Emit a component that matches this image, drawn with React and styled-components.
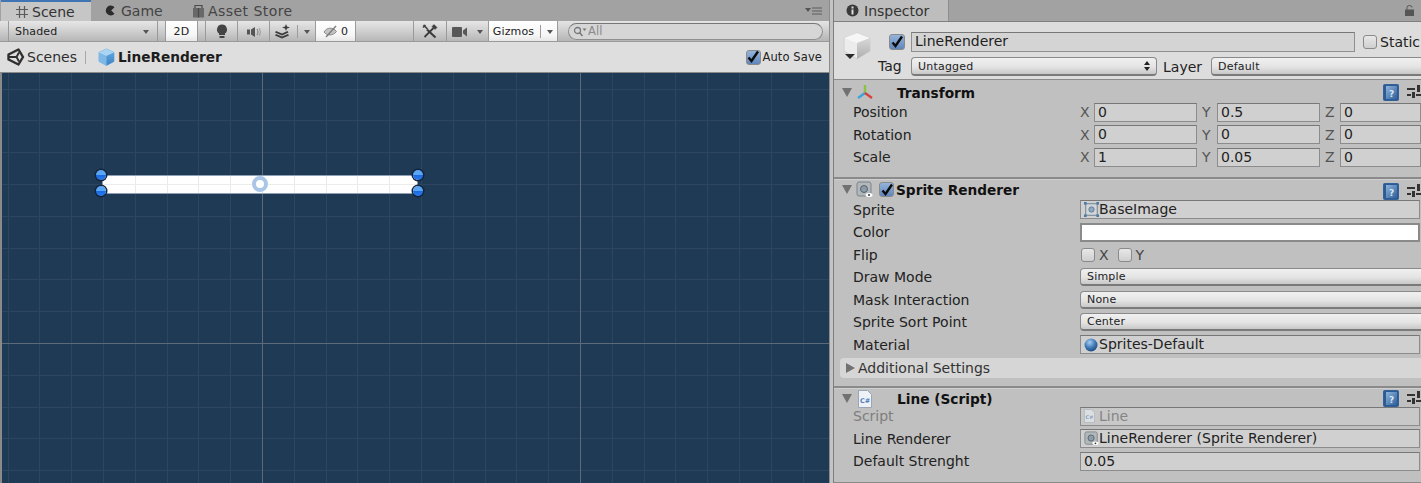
import React from "react";
import styled, { createGlobalStyle } from "styled-components";

const Global = createGlobalStyle`
  html, body { margin: 0; padding: 0; background: #bdbdbd; overflow: hidden; }
  body { font-family: "DejaVu Sans", Verdana, sans-serif; color: #111; }
`;

const Page = styled.div`
  display: flex;
  width: 1421px;
  height: 483px;
  overflow: hidden;
`;

/* ---------- Scene panel ---------- */
const ScenePanel = styled.section`
  width: 829px;
  flex: none;
  display: flex;
  flex-direction: column;
`;
const TabBar = styled.div`
  height: 21px;
  flex: none;
  display: flex;
  align-items: stretch;
  background: #a2a2a2;
  position: relative;
  padding-left: ${(p) => p.$pad}px;
`;
const Tab = styled.div`
  display: flex;
  align-items: center;
  flex: none;
  gap: ${(p) => p.$gap || 3}px;
  box-sizing: border-box;
  width: ${(p) => p.$w}px;
  padding-left: ${(p) => p.$pl}px;
  font-size: 14px;
  letter-spacing: ${(p) => p.$ls || 0}px;
  color: ${(p) => (p.$active ? "#333" : "#444")};
  background: ${(p) => (p.$active ? "#c6c6c6" : "transparent")};
  border-top: ${(p) => (p.$blue ? "2px solid #3f74b5" : "none")};
  ${(p) => p.$active && !p.$blue && "border-right: 1px solid #8e8e8e; background: #bdbdbd;"}
`;
const MenuIcon = styled.svg`
  position: absolute;
  right: ${(p) => p.$r}px;
  top: ${(p) => p.$t}px;
`;
const Toolbar = styled.div`
  height: 21px;
  flex: none;
  box-sizing: border-box;
  display: flex;
  align-items: stretch;
  padding-left: 8px;
  background: linear-gradient(#e4e4e4, #d0d0d0 45%, #b4b4b4);
  border-bottom: 1px solid #9a9a9a;
  font-size: 11px;
  letter-spacing: .15px;
  color: #222;
`;
const ToolBtn = styled.div`
  width: ${(p) => p.$w}px;
  flex: none;
  box-sizing: border-box;
  display: flex;
  align-items: center;
  justify-content: ${(p) => p.$left ? "space-between" : "center"};
  gap: ${(p) => p.$gap || 0}px;
  padding: ${(p) => p.$left ? "1px 8px 0 6px" : "1px 0 0"};
  margin-left: ${(p) => p.$ml || 0}px;
  border-right: 1px solid #9a9a9a;
  ${(p) => p.$first && "border-left: 1px solid #9a9a9a;"}
  background: ${(p) => p.$on ? "linear-gradient(#fff, #f6f6f6 70%, #e6e6e6)" : "linear-gradient(#e6e6e6, #d2d2d2 45%, #b6b6b6)"};
`;
const Caret = styled.i`
  display: inline-block;
  width: 0;
  height: 0;
  border-left: 3px solid transparent;
  border-right: 3px solid transparent;
  border-top: 4px solid #555;
`;
const SplitLine = styled.i`
  width: 1px;
  align-self: stretch;
  margin: 3px 0;
  background: #9c9c9c;
`;
const SearchWrap = styled.div`
  margin-left: 10px;
  width: 255px;
  height: 17px;
  align-self: center;
  box-sizing: border-box;
  border: 1px solid #8f8f8f;
  border-top-color: #777;
  border-radius: 9px;
  background: #d6d6d6;
  display: flex;
  align-items: center;
  gap: 1px;
  padding-left: 4px;
  font-size: 11.5px;
  color: #8a8a8a;
`;
const Crumbs = styled.div`
  height: 31px;
  flex: none;
  box-sizing: border-box;
  background: #dedede;
  border-bottom: 1px solid #8a8a8a;
  display: flex;
  align-items: center;
  padding: 0 7px;
  font-size: 14px;
  color: #2e2e2e;
`;
const CrumbSep = styled.i`
  width: 1px;
  height: 13px;
  background: #a8a8a8;
  margin: 0 12px 0 8px;
`;
const Bold = styled.span`
  font-weight: 700;
  font-size: 13.7px;
  color: #1c1c1c;
`;
const AutoSave = styled.label`
  margin-left: auto;
  display: flex;
  align-items: center;
  gap: 2px;
  font-size: 11.5px;
  letter-spacing: .1px;
  color: #222;
`;
const Viewport = styled.div`
  flex: 1;
  position: relative;
  overflow: hidden;
  background: #1f3a55;
  &::after {
    content: "";
    position: absolute;
    left: 0;
    top: 0;
    bottom: 0;
    width: 2px;
    background: #8a8a8a;
  }
`;
const GridSvg = styled.svg`
  position: absolute;
  left: 0;
  top: 0;
`;
const Sprite = styled.div`
  position: absolute;
  left: 103px;
  top: 103px;
  width: 314px;
  height: 17px;
  background: #fff;
  box-shadow: 0 0 0 1px #8ea0b3;
`;
const Handle = styled.i`
  position: absolute;
  width: 10px;
  height: 10px;
  border-radius: 50%;
  background: linear-gradient(#5ba5f5 0 45%, #1a6be0 55%, #2b7cf0);
  box-shadow: 0 0 0 1.5px #14243a;
  left: ${(p) => p.$x}px;
  top: ${(p) => p.$y}px;
`;
const Pivot = styled.i`
  position: absolute;
  left: 252px;
  top: 103px;
  width: 8px;
  height: 8px;
  border-radius: 50%;
  border: 4px solid #a9c6e6;
  background: #fff;
  filter: blur(.5px);
`;

/* ---------- Inspector ---------- */
const Divider = styled.div`
  width: 4px;
  flex: none;
  background: #c4c4c4;
  box-sizing: border-box;
  border-left: 1px solid #8c8c8c;
`;
const InspectorPanel = styled.section`
  flex: 1;
  min-width: 0;
  display: flex;
  flex-direction: column;
  background: #c0c0c0;
  border-left: 1px solid #7d7d7d;
  font-size: 14px;
  color: #222;
`;
const InspHead = styled.div`
  height: 59px;
  flex: none;
  box-sizing: border-box;
  background: #dddddd;
  border-top: 1px solid #7f7f7f;
  border-bottom: 1px solid #8a8a8a;
  display: grid;
  grid-template-columns: 77px 1fr;
  position: relative;
`;
const BigCube = styled.svg`
  position: absolute;
  left: 9px;
  top: 10px;
`;
const HeadCol = styled.div`
  grid-column: 2;
  display: flex;
  flex-direction: column;
`;
const NameRow = styled.div`
  display: flex;
  align-items: center;
  height: 20px;
  margin-top: 10px;
`;
const NameField = styled.div`
  width: 444px;
  height: 20px;
  flex: none;
  box-sizing: border-box;
  border: 1px solid #8f8f8f;
  border-top-color: #777;
  background: #d4d4d4;
  padding-left: 3px;
  line-height: 17px;
  margin-right: 8px;
`;
const TagRow = styled.div`
  display: flex;
  align-items: center;
  height: 19px;
  margin-top: 5px;
`;
const TagLabel = styled.span`
  position: absolute;
  left: 44px;
  top: 36px;
`;
const Check = styled.span`
  width: ${(p) => p.$s || 14}px;
  height: ${(p) => p.$s || 14}px;
  flex: none;
  box-sizing: border-box;
  border: 1px solid #8a8a8a;
  border-radius: 3px;
  background: ${(p) => p.$on ? "linear-gradient(#95b4dc, #5f86bb)" : "linear-gradient(#e8e8e8, #cfcfcf)"};
  display: inline-flex;
  align-items: center;
  justify-content: center;
  margin-left: ${(p) => p.$ml || 0}px;
  margin-right: ${(p) => p.$mr || 0}px;
`;
const Drop = styled.div`
  width: ${(p) => p.$w ? `${p.$w}px` : "auto"};
  flex: ${(p) => p.$w ? "none" : "1"};
  height: ${(p) => p.$h || 19}px;
  box-sizing: border-box;
  border: 1px solid #8a8a8a;
  border-bottom: 2px solid #7a7a7a;
  border-radius: 4px;
  background: linear-gradient(#f0f0f0, #e4e4e4 55%, #c8c8c8);
  font-size: 11px;
  letter-spacing: .2px;
  padding-left: 6px;
  padding-right: 6px;
  display: flex;
  align-items: center;
  justify-content: space-between;
  margin-left: ${(p) => p.$ml || 0}px;
  color: #222;
`;
const LayerLabel = styled.span`
  margin-left: 6px;
`;
const CompHead = styled.div`
  height: ${(p) => p.$h}px;
  box-sizing: content-box;
  flex: none;
  position: relative;
  display: flex;
  align-items: center;
  padding-left: 8px;
  padding-top: ${(p) => p.$pt}px;
  margin-bottom: ${(p) => -p.$pt}px;
  font-weight: 700;
  font-size: 13.7px;
  color: #111;
`;
const Triangle = styled.i`
  width: 0;
  height: 0;
  border-left: 5.5px solid transparent;
  border-right: 5.5px solid transparent;
  border-top: 9px solid #717171;
  flex: none;
  margin-right: 4px;
`;
const CompIconSlot = styled.span`
  width: 17px;
  height: 17px;
  flex: none;
  display: inline-flex;
  align-items: center;
  justify-content: center;
`;
const CompTitle = styled.span`
  margin-left: ${(p) => p.$ml || 0}px;
`;
const RightIcons = styled.span`
  position: absolute;
  left: 549px;
  top: ${(p) => p.$t}px;
  display: flex;
  gap: 8px;
`;
const Row = styled.div`
  height: 22.5px;
  flex: none;
  display: grid;
  grid-template-columns: 227px 1fr;
  align-items: center;
  padding-left: 19px;
  color: ${(p) => p.$dim ? "#7e7e7e" : "#222"};
`;
const Vec3 = styled.div`
  display: grid;
  grid-template-columns: 14px 103px 5px 15px 103px 5px 15px 1fr;
  align-items: center;
  font-size: 14px;
  color: #555;
`;
const AxisLabel = styled.span`
  grid-column: ${(p) => p.$col};
`;
const NumField = styled.div`
  height: 19px;
  box-sizing: border-box;
  border: 1px solid #8c8c8c;
  border-top-color: #777;
  background: #d0d0d0;
  line-height: 17px;
  padding-left: 3px;
  color: #222;
  grid-column: ${(p) => p.$col};
`;
const ObjField = styled.div`
  height: 19px;
  margin-right: 1px;
  box-sizing: border-box;
  border: 1px solid #8c8c8c;
  border-top-color: #777;
  background: ${(p) => p.$bg || "#d0d0d0"};
  display: flex;
  align-items: center;
  padding-left: 3px;
  line-height: 17px;
  color: ${(p) => p.$dim ? "#858585" : "#222"};
`;
const ColorField = styled.div`
  height: 19px;
  margin-right: 1px;
  box-sizing: border-box;
  border: 2px solid #8a8a8a;
  background: #fff;
`;
const FlipCell = styled.div`
  display: flex;
  align-items: center;
  color: #444;
`;
const FlipLabel = styled.span`
  margin: 0 9px 0 4px;
`;
const RowDrop = styled(Drop)`
  margin-right: -8px;
  height: 18px;
`;
const Separator = styled.div`
  height: 2px;
  flex: none;
  margin-top: ${(p) => p.$mt || 0}px;
  background: #8a8a8a;
  box-shadow: 0 1px 0 #cfcfcf;
`;
const Foldout = styled.div`
  height: 20px;
  flex: none;
  margin: 2px 0 0 6px;
  border-radius: 4px 0 0 4px;
  background: #d6d6d6;
  display: flex;
  align-items: center;
  padding-left: 6px;
  gap: 3px;
  color: #333;
`;
const FoldArrow = styled.i`
  width: 0;
  height: 0;
  border-top: 5px solid transparent;
  border-bottom: 5px solid transparent;
  border-left: 9px solid #717171;
`;

/* ---------- Icons ---------- */
const Ico = styled.svg`
  flex: none;
  display: block;
  margin-right: ${(p) => p.$mr || 0}px;
`;

const GridIcon = () => (
  <Ico width="14" height="14" viewBox="0 0 14 14" stroke="#5a5a5a" strokeWidth="1.2">
    <path d="M4.5 1v12M9.5 1v12M1 4.5h12M1 9.5h12" />
  </Ico>
);
const PacIcon = () => (
  <Ico width="13" height="13" viewBox="0 0 13 13"><path d="M10.5 3.2A5 5 0 1 0 10.5 9.8L7.2 6.5z" fill="#2c2c2c" /></Ico>
);
const BagIcon = () => (
  <Ico width="13" height="14" viewBox="0 0 13 14">
    <rect x="1" y="4" width="11" height="9.5" fill="#686868" />
    <path d="M3 4V1.5h7V4M6.5 4v9.5" fill="none" stroke="#4a4a4a" strokeWidth="1.2" />
  </Ico>
);
const BulbIcon = () => (
  <Ico width="12" height="15" viewBox="0 0 12 15">
    <path d="M6 .5a5 5 0 0 0-3 9v1.5h6V9.5a5 5 0 0 0-3-9z" fill="#444" />
    <rect x="3.5" y="12" width="5" height="2" fill="#444" />
  </Ico>
);
const AudioIcon = () => (
  <Ico width="16" height="12" viewBox="0 0 16 12" fill="#555">
    <rect x="1" y="3.5" width="3" height="5" />
    <path d="M5 3.5 9 1v10L5 8.5z" />
    <path d="M11 3c1.3 2 1.3 4 0 6" fill="none" stroke="#777" />
    <path d="M13 2c1.7 2.7 1.7 5.3 0 8" fill="none" stroke="#999" />
  </Ico>
);
const FxIcon = () => (
  <Ico width="16" height="15" viewBox="0 0 16 15" fill="#3d3d3d">
    <path d="M11 0l1 2.5 3 1-3 1-1 2.5-1-2.5-3-1 3-1z" />
    <path d="M1 7l6 2.5L12.5 7l1 1.5L7 11.5 0 8.500z" />
    <path d="M1 10l6 2.5L13 10l1 1.5L7 14.5 0 11.500z" />
  </Ico>
);
const EyeOff = () => (
  <Ico width="15" height="13" viewBox="0 0 15 13" fill="none">
    <path d="M1 7c3-5 9-5 12.5-.5C10 11 4 11 1 7z" fill="#c4c4c4" stroke="#8a8a8a" />
    <path d="M3 12 13 1" stroke="#7a7a7a" strokeWidth="1.3" />
  </Ico>
);
const ToolsIcon = () => (
  <Ico width="16" height="15" viewBox="0 0 16 15" fill="none" stroke="#3c3c3c">
    <path d="M5 5.500 13.500 13.500" strokeWidth="2.200" />
    <path d="M1.500 1 5.500 5M1 3.500 3.500 1" strokeWidth="1.600" />
    <path d="M11.500 4 2.500 13" strokeWidth="1.800" />
    <path d="M10 2.500 12 .5l3 3-2 2z" fill="#3c3c3c" strokeWidth=".5" />
  </Ico>
);
const CamIcon = () => (
  <Ico width="15" height="10" viewBox="0 0 15 10" fill="#585858">
    <rect x="0" y="0" width="10" height="10" rx="1" />
    <path d="M11 3.5 15 .5v9L11 6.500z" />
  </Ico>
);
const SearchIcon = () => (
  <Ico width="14" height="11" viewBox="0 0 14 11" fill="none" stroke="#777">
    <circle cx="4.5" cy="4.5" r="3" strokeWidth="1.3" />
    <path d="M6.8 6.800 9.500 10" strokeWidth="1.5" />
    <path d="M9.500 2.500h4L11.500 5z" fill="#777" stroke="none" />
  </Ico>
);
const UnityIcon = () => (
  <Ico width="18" height="18" viewBox="0 0 18 18" $mr={2}>
    <path d="M11.500 1.500 16 9l-4.500 7.500L1.500 11.500v-5z" fill="none" stroke="#2f2f2f" strokeWidth="2.400" strokeLinejoin="round" />
    <path d="M2 9h7.500L12 4.500M9.500 9l2.500 4.500" fill="none" stroke="#2f2f2f" strokeWidth="1.900" />
  </Ico>
);
const CubeIcon = () => (
  <Ico width="17" height="18" viewBox="0 0 17 18" $mr={3}>
    <defs>
      <linearGradient id="cubeR" x1="0" y1="0" x2="0" y2="1">
        <stop offset="0" stopColor="#5ea3df" />
        <stop offset="1" stopColor="#3f82c2" />
      </linearGradient>
    </defs>
    <path d="M8.500 1 16 4.500v9L8.500 17.500 1 13.500v-9z" fill="#7fb8e6" stroke="#7fb8e6" strokeLinejoin="round" />
    <path d="M8.500 1 16 4.500 8.500 8 1 4.500z" fill="#a9d4f4" />
    <path d="M8.500 8 16 4.500v9l-7.500 4z" fill="url(#cubeR)" />
  </Ico>
);
const GreyCube = () => (
  <BigCube width="29" height="29" viewBox="0 0 29 29">
    <defs>
      <linearGradient id="greyR" x1="0" y1="0" x2="0" y2="1">
        <stop offset="0" stopColor="#d8d8d8" />
        <stop offset="1" stopColor="#aeaeae" />
      </linearGradient>
    </defs>
    <path d="M14 1 27 6v13l-13 8L1 19V6z" fill="#ececec" stroke="#cfcfcf" strokeLinejoin="round" />
    <path d="M14 1 27 6 14 11 1 6z" fill="#f6f6f6" />
    <path d="M14 11 27 6v13l-13 8z" fill="url(#greyR)" />
    <path d="M2 22h10l-5 5z" fill="#2a2a2a" />
  </BigCube>
);
const Tick = () => (
  <Ico width="14" height="14" viewBox="0 0 14 14">
    <path d="M2.500 7.500 5.500 11 12 1.500" fill="none" stroke="#0c0c0c" strokeWidth="2.400" />
  </Ico>
);
const UpDownIcon = () => (
  <Ico width="6" height="10" viewBox="0 0 6 10" fill="#222">
    <path d="M3 0 6 4H0zM3 10 0 6h6z" />
  </Ico>
);
const InfoIcon = () => (
  <Ico width="13" height="13" viewBox="0 0 13 13">
    <circle cx="6.500" cy="6.500" r="6" fill="#3a3a3a" />
    <rect x="5.500" y="5.500" width="2" height="5" fill="#ddd" />
    <rect x="5.500" y="2.500" width="2" height="2" fill="#ddd" />
  </Ico>
);
const AxisIcon = () => (
  <Ico width="18" height="17" viewBox="0 0 18 17" fill="none" strokeWidth="2.400">
    <path d="M9 9V1" stroke="#8ac43f" />
    <path d="M9 9 2 14" stroke="#3aa5d8" />
    <path d="M9 9l7 5" stroke="#d8423a" />
  </Ico>
);
const HelpBook = () => (
  <Ico width="16" height="17" viewBox="0 0 16 17">
    <defs>
      <linearGradient id="book" x1="0" y1="0" x2="1" y2="1">
        <stop offset="0" stopColor="#8fb5dc" />
        <stop offset="1" stopColor="#2f5f99" />
      </linearGradient>
    </defs>
    <rect x="0.500" y="0.500" width="15" height="16" rx="1" fill="#2d5a92" stroke="#33619a" />
    <rect x="3" y="2" width="11" height="13" fill="url(#book)" />
    <text x="8.500" y="12.500" fontSize="9" fontWeight="700" fontFamily="DejaVu Sans" fill="#d6e6f6" textAnchor="middle">?</text>
  </Ico>
);
const SlidersIcon = () => (
  <Ico width="15" height="15" viewBox="0 0 15 15" fill="#333">
    <rect x="0" y="4" width="8" height="2" />
    <rect x="10" y="1" width="3" height="7" />
    <rect x="0" y="10" width="4" height="2" />
    <rect x="5" y="8" width="3" height="6" />
    <rect x="9" y="10" width="5" height="2" />
  </Ico>
);
const SpriteIcon = () => (
  <Ico width="15" height="15" viewBox="0 0 17 17">
    <rect x="2" y="2" width="13" height="13" fill="#cfd6dc" stroke="#6c7a86" />
    <circle cx="8.500" cy="8.500" r="3" fill="#8fa9c0" stroke="#63778a" />
    <g fill="#4a7cab">
      <rect x="0" y="0" width="3" height="3" />
      <rect x="14" y="0" width="3" height="3" />
      <rect x="0" y="14" width="3" height="3" />
      <rect x="14" y="14" width="3" height="3" />
    </g>
  </Ico>
);
const RendererIcon = ({ s = 17 }) => (
  <Ico width={s} height={s} viewBox="0 0 17 17">
    <rect x="1" y="1" width="14" height="14" rx="2" fill="#b2b7ba" stroke="#7d858b" />
    <circle cx="8" cy="8" r="3.500" fill="#8b9ba8" stroke="#56636d" />
    <ellipse cx="13" cy="14" rx="3.500" ry="2" fill="#fff" />
    <circle cx="13" cy="14" r="1" fill="#333" />
  </Ico>
);
const BallIcon = () => (
  <Ico width="14" height="14" viewBox="0 0 14 14" $mr={1}>
    <defs>
      <radialGradient id="ball" cx="40%" cy="30%" r="70%">
        <stop offset="0" stopColor="#a6cdf0" />
        <stop offset=".6" stopColor="#3f79b6" />
        <stop offset="1" stopColor="#1f4d80" />
      </radialGradient>
    </defs>
    <circle cx="7" cy="7" r="6.500" fill="url(#ball)" />
  </Ico>
);
const ScriptIcon = ({ dim }) => (
  <Ico width={dim ? 11 : 14} height={dim ? 14 : 18} viewBox="0 0 14 18" opacity={dim ? .55 : 1} $mr={dim ? 4 : 0}>
    <path d="M.5.500h9l4 4v13H.5z" fill="#eef2f7" stroke="#9aa6b2" />
    <text x="7" y="13" fontSize="6.500" fontWeight="700" fontFamily="DejaVu Sans" fill="#4f7fc0" textAnchor="middle">C#</text>
  </Ico>
);

const GridLines = () => {
  const minor = 31.8;
  const xs = [];
  for (let i = -8; i < 18; i++) xs.push(Math.round(262 + i * minor) + 0.5);
  const ys = [];
  for (let i = -8; i < 5; i++) ys.push(Math.round(270 + i * minor) + 0.5);
  return (
    <GridSvg width="829" height="410">
      {xs.map((x) => (
        <line key={x} x1={x} x2={x} y1="0" y2="410" stroke="#2d4560" />
      ))}
      {ys.map((y) => (
        <line key={y} y1={y} y2={y} x1="0" x2="829" stroke="#2d4560" />
      ))}
      <line x1="262.500" x2="262.500" y1="0" y2="410" stroke="#5c6a79" />
      <line x1="580.500" x2="580.500" y1="0" y2="410" stroke="#5c6a79" />
      <line x1="0" x2="829" y1="270.500" y2="270.500" stroke="#5c6a79" />
    </GridSvg>
  );
};

const SpriteLines = () => (
  <GridSvg width="314" height="17">
    {[32, 64, 95, 127, 159, 191, 223, 254, 286].map((x) => (
      <line key={x} x1={x + 0.5} x2={x + 0.5} y1="0" y2="17" stroke="#eaeaea" />
    ))}
    <line x1="0" x2="314" y1="8.500" y2="8.500" stroke="#ececec" />
  </GridSvg>
);

const Vector = ({ label, x, y, z }) => (
  <Row>
    <span>{label}</span>
    <Vec3>
      <AxisLabel $col={1}>X</AxisLabel>
      <NumField $col={2}>{x}</NumField>
      <AxisLabel $col={4}>Y</AxisLabel>
      <NumField $col={5}>{y}</NumField>
      <AxisLabel $col={7}>Z</AxisLabel>
      <NumField $col={8}>{z}</NumField>
    </Vec3>
  </Row>
);

const HeadIcons = ({ t }) => (
  <RightIcons $t={t}>
    <HelpBook />
    <SlidersIcon />
  </RightIcons>
);

export default function App() {
  return (
    <Page>
      <Global />
      <ScenePanel>
        <TabBar $pad={1}>
          <Tab $active $blue $w={90} $pl={14}><GridIcon />Scene</Tab>
          <Tab $w={101} $pl={13} $gap={4}><PacIcon />Game</Tab>
          <Tab $w={110} $pl={0} $ls={.45}><BagIcon />Asset Store</Tab>
          <MenuIcon $r={6} $t={7} width="18" height="8" viewBox="0 0 18 8">
            <path d="M0 1h6L3 5z" fill="#555" />
            <path d="M7 1h10M7 4h10M7 7h10" stroke="#5c5c5c" strokeWidth="1.200" />
          </MenuIcon>
        </TabBar>
        <Toolbar>
          <ToolBtn $w={150} $left $first>Shaded<Caret /></ToolBtn>
          <ToolBtn $w={33} $ml={7} $on $first>2D</ToolBtn>
          <ToolBtn $w={33} $ml={7} $first><BulbIcon /></ToolBtn>
          <ToolBtn $w={32}><AudioIcon /></ToolBtn>
          <ToolBtn $w={46} $gap={6}><FxIcon /><SplitLine /><Caret /></ToolBtn>
          <ToolBtn $w={40} $on $gap={3}><EyeOff />0</ToolBtn>
          <ToolBtn $w={58} />
          <ToolBtn $w={33}><ToolsIcon /></ToolBtn>
          <ToolBtn $w={42} $gap={10}><CamIcon /><Caret /></ToolBtn>
          <ToolBtn $w={69} $on $gap={6}>Gizmos<SplitLine /><Caret /></ToolBtn>
          <SearchWrap><SearchIcon />All</SearchWrap>
        </Toolbar>
        <Crumbs>
          <UnityIcon />
          Scenes
          <CrumbSep />
          <CubeIcon />
          <Bold>LineRenderer</Bold>
          <AutoSave>
            <Check $s={15} $on><Tick /></Check>
            Auto Save
          </AutoSave>
        </Crumbs>
        <Viewport>
          <GridLines />
          <Sprite><SpriteLines /></Sprite>
          <Pivot />
          <Handle $x={96} $y={97} />
          <Handle $x={96} $y={113} />
          <Handle $x={413} $y={97} />
          <Handle $x={413} $y={113} />
        </Viewport>
      </ScenePanel>
      <Divider />
      <InspectorPanel>
        <TabBar $pad={0}>
          <Tab $active $w={115} $pl={12} $gap={5}><InfoIcon />Inspector</Tab>
          <MenuIcon $r={7} $t={5} width="9" height="11" viewBox="0 0 9 11">
            <rect x="0" y="4.500" width="9" height="6.500" fill="#555" />
            <path d="M2 4.500V2.500a2.500 2 0 0 1 5 0" fill="none" stroke="#555" />
          </MenuIcon>
        </TabBar>
        <InspHead>
          <GreyCube />
          <TagLabel>Tag</TagLabel>
          <HeadCol>
            <NameRow>
              <Check $s={16} $on $mr={6} $ml={-22}><Tick /></Check>
              <NameField>LineRenderer</NameField>
              <Check $mr={3} />
              Static
            </NameRow>
            <TagRow>
              <Drop $w={246}>Untagged<UpDownIcon /></Drop>
              <LayerLabel>Layer</LayerLabel>
              <Drop $w={230} $ml={9}>Default</Drop>
            </TagRow>
          </HeadCol>
        </InspHead>
        <CompHead $h={21} $pt={2}>
          <Triangle />
          <CompIconSlot><AxisIcon /></CompIconSlot>
          <CompTitle $ml={24}>Transform</CompTitle>
          <HeadIcons t={4} />
        </CompHead>
        <Vector label="Position" x="0" y="0.5" z="0" />
        <Vector label="Rotation" x="0" y="0" z="0" />
        <Vector label="Scale" x="1" y="0.05" z="0" />
        <Separator $mt={8} />
        <CompHead $h={20} $pt={1}>
          <Triangle />
          <CompIconSlot><RendererIcon /></CompIconSlot>
          <Check $s={15} $on $ml={6} $mr={2}><Tick /></Check>
          <CompTitle>Sprite Renderer</CompTitle>
          <HeadIcons t={4} />
        </CompHead>
        <Row>
          <span>Sprite</span>
          <ObjField><SpriteIcon />BaseImage</ObjField>
        </Row>
        <Row>
          <span>Color</span>
          <ColorField />
        </Row>
        <Row>
          <span>Flip</span>
          <FlipCell>
            <Check $ml={1} />
            <FlipLabel>X</FlipLabel>
            <Check />
            <FlipLabel>Y</FlipLabel>
          </FlipCell>
        </Row>
        <Row><span>Draw Mode</span><RowDrop>Simple</RowDrop></Row>
        <Row><span>Mask Interaction</span><RowDrop>None</RowDrop></Row>
        <Row><span>Sprite Sort Point</span><RowDrop>Center</RowDrop></Row>
        <Row><span>Material</span><ObjField><BallIcon />Sprites-Default</ObjField></Row>
        <Foldout><FoldArrow />Additional Settings</Foldout>
        <Separator $mt={8} />
        <CompHead $h={17} $pt={2}>
          <Triangle />
          <CompIconSlot><ScriptIcon /></CompIconSlot>
          <CompTitle $ml={24}>Line (Script)</CompTitle>
          <HeadIcons t={2} />
        </CompHead>
        <Row $dim><span>Script</span><ObjField $dim $bg="#c8c8c8"><ScriptIcon dim />Line</ObjField></Row>
        <Row><span>Line Renderer</span><ObjField><RendererIcon s={15} />LineRenderer (Sprite Renderer)</ObjField></Row>
        <Row><span>Default Strenght</span><ObjField>0.05</ObjField></Row>
        <Separator $mt={9} />
      </InspectorPanel>
    </Page>
  );
}
